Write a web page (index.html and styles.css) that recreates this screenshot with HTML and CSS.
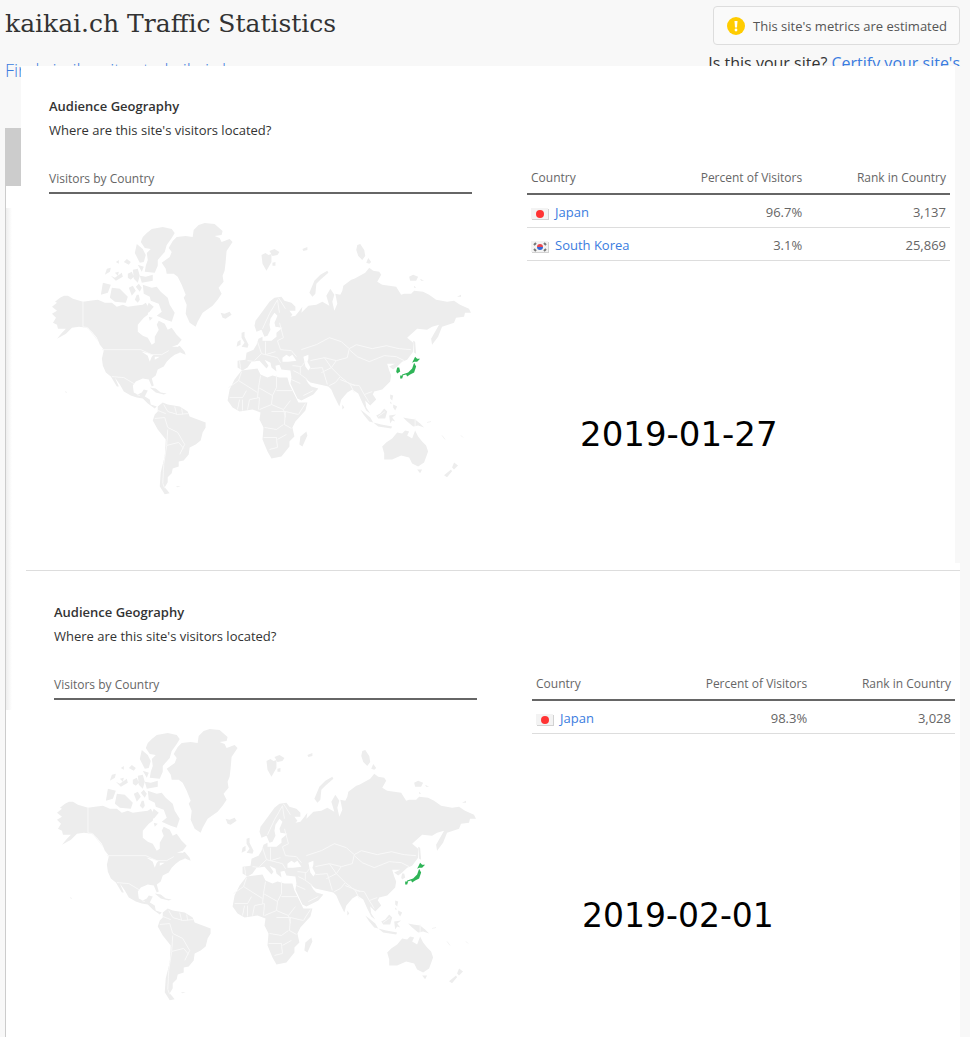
FILE: index.html
```html
<!DOCTYPE html>
<html lang="en">
<head>
<meta charset="utf-8">
<title>kaikai.ch Traffic Statistics</title>
<link rel="stylesheet" href="styles.css">
</head>
<body>
<svg class="defs" aria-hidden="true">
  <symbol id="world" viewBox="49 210 424 300">
    <g class="land">
      <!-- North America -->
      <path d="M64 296L68 296L73 299L83 302L90 301L98 300L105 303L112 303L117 307L123 305L128 307L135 306L143 305L146 303L149 308L148 315L144 318L138 325L138 332L143 336L148 338L152 345L155 343L155 337L159 330L157 325L159 321L165 324L168 330L172 328L177 335L182 340L178 345L172 347L177 347L181 349L180 353L175 355L171 358L167 362L164 367L158 370L156 376L152 379L154 386L152 387L149 380L143 379L136 382L133 386L134 393L138 395L142 393L144 390L148 391L145 397L150 400L151 405L157 407L155 409L148 404L143 399L137 398L131 396L124 392L120 385L115 378L119 387L117 387L111 377L106 373L103 366L102 359L104 350L100 345L97 338L92 332L87 328L79 327L72 328L66 334L57 339L62 333L66 329L58 329L57 325L53 323L56 318L52 314L57 311L52 307L57 303L55 302L60 298Z"/>
      <!-- Arctic archipelago -->
      <path d="M143 237L147 233L152 229L163 227L172 229L175 233L172 238L167 245L165 252L158 260L158 266L155 273L145 272L146 266L148 260L147 253L151 249L145 248L141 242Z"/>
      <path d="M137 244L143 249L146 255L144 262L140 263L135 253Z"/>
      <path d="M103 283L111 285L108 293L101 295Z"/>
      <path d="M112 288L120 289L125 294L128 297L126 303L115 302L110 298Z"/>
      <path d="M143 285L152 288L157 287L161 292L168 298L170 305L175 313L172 322L166 320L157 316L162 312L159 304L151 301L150 297L144 294Z"/>
      <path d="M105 275L107 269L111 268L110 272ZM111 276L115 278L122 273L123 277L116 281ZM124 262L127 259L131 262L129 265ZM128 274L132 272L134 277L131 280L128 278ZM133 270L138 269L140 276L138 283L134 279ZM138 265L144 267L142 272ZM140 276L146 277L153 275L153 281L142 283ZM129 288L133 286L136 291L132 296ZM136 287L139 284L142 288L140 292ZM137 295L139 295L140 300L138 303L135 300ZM149 303L154 307L149 313L146 310ZM149 317L153 318L150 321ZM116 262L119 260L119 264ZM115 273L119 272L118 276Z"/>
      <!-- Greenland, Iceland -->
      <path d="M177 237L186 236L193 237L194 230L199 225L205 223L215 224L223 231L222 235L215 236L220 238L222 242L230 239L233 242L227 251L226 263L225 271L223 276L224 282L219 288L222 294L218 300L213 306L203 313L198 322L196 327L190 323L186 314L187 305L184 298L186 295L182 285L178 277L174 274L167 274L166 269L162 263L170 257L172 252L169 248L173 241Z"/>
      <path d="M221 313L225 314L230 312L232 315L226 319L223 318Z"/>
      <path d="M150 388L156 389L161 393L167 394L164 395L156 393ZM104 345L108 350L105 350ZM176 348L180 346L185 352L186 355L181 353Z"/>
      <!-- South America -->
      <path d="M158 407L163 403L168 405L180 407L188 412L190 417L198 420L206 423L206 428L203 433L201 441L196 445L190 448L189 455L184 461L179 462L179 467L173 469L172 474L168 478L168 483L165 488L170 494L165 495L160 487L161 473L165 457L166 440L158 430L153 421L155 415L158 412Z"/>
      <path d="M176 487L181 487L178 488Z"/>
      <!-- Africa -->
      <path d="M242 371L250 370L258 369L261 375L268 378L273 376L280 378L288 378L290 385L296 397L299 403L308 403L306 411L296 422L293 428L295 437L290 442L290 447L282 457L272 459L268 452L263 440L264 428L260 420L261 413L253 410L240 412L233 408L228 401L230 390L235 380Z"/>
      <path d="M307 432L308 436L303 447L300 445L301 437Z"/>
      <!-- Europe and Asia -->
      <path d="M255 326L256 321L262 313L270 302L275 298L282 297L285 301L292 303L296 307L296 311L290 311L293 315L291 317L296 316L300 311L303 307L302 313L309 306L317 305L323 302L330 306L327 296L331 289L335 295L333 302L335 311L338 304L336 294L341 295L343 291L344 286L352 280L355 279L366 273L370 268L374 271L380 272L382 275L378 282L383 285L390 286L397 287L402 295L405 294L412 294L415 291L424 292L430 295L437 300L448 302L455 301L461 305L470 309L472 313L466 313L465 317L457 318L455 323L449 325L443 327L439 337L433 345L432 339L440 325L433 327L428 330L418 329L408 338L414 343L414 352L408 360L403 362L398 367L394 370L390 367L396 364L388 364L390 371L392 376L391 382L383 390L375 392L373 394L377 400L371 406L366 401L367 408L371 414L367 411L363 403L359 394L353 390L348 393L342 400L340 407L335 397L332 390L329 387L320 385L311 383L306 379L309 384L312 387L319 389L314 395L302 401L298 399L291 384L292 378L291 371L282 370L280 365L276 366L277 372L272 368L271 363L265 360L269 366L267 369L260 361L252 362L248 368L243 371L238 368L238 361L246 360L247 353L254 350L257 345L259 339L263 337L263 341L272 341L277 337L277 333L283 328L276 327L275 323L278 316L275 313L271 319L270 325L271 330L268 336L265 337L262 330L257 332Z"/>
      <path d="M262 255L266 253L269 255L272 254L272 262L267 271L263 264ZM270 251L275 249L280 252L278 255L273 256ZM273 263L276 262L276 266L273 266ZM303 249L308 247L308 250L304 251ZM358 245L361 244L365 250L366 256L363 260L359 256L357 250ZM367 263L369 258L372 262L370 264ZM410 277L414 275L419 277L417 281L411 281ZM421 279L425 281L422 281ZM415 286L417 288L415 288ZM458 297L462 295L462 297Z"/>
      <path d="M242 333L245 332L245 337L249 345L248 348L242 347L245 343L242 338ZM238 342L241 340L241 345L237 347ZM414 341L416 342L417 354L415 353Z"/>
      <path d="M328 271L329 273L321 280L317 284L316 294L313 297L310 293L315 281L321 275Z"/>
      <!-- South-east Asia and Oceania -->
      <path d="M361 410L365 413L371 418L374 423L370 422L365 416ZM374 423L382 425L393 427L392 429L379 427ZM377 416L381 414L385 409L388 412L386 419L379 419ZM390 416L397 415L393 418L396 422L393 421L391 424ZM391 395L394 396L393 401L391 399ZM394 405L398 407L396 411L394 408ZM391 402L393 404L391 404ZM404 418L409 419L416 420L421 424L425 428L419 426L414 427L408 422ZM343 405L345 408L343 410ZM372 392L375 393L373 395Z"/>
      <path d="M383 447L387 443L393 439L398 433L403 434L406 431L410 432L408 436L413 439L416 431L419 437L423 442L427 446L429 452L425 463L419 467L413 464L410 458L402 456L393 460L385 460L385 454Z"/>
      <path d="M418 470L423 470L421 474ZM455 463L459 466L455 470L453 468ZM452 470L453 472L448 478L445 476Z"/>
      <path d="M443 436L446 440M462 436L464 438M65 392L67 393M428 423L432 422" class="isle"/>
    </g>
    <g class="sea">
      <path d="M283 358L287 355L290 357L293 355L297 361L289 362L283 362Z"/>
      <path d="M304 357L309 355L309 359L308 362L311 368L309 371L306 367Z"/>
      <path d="M142 352L147 353L154 355L152 357L150 362L148 356ZM155 357L160 357L155 360Z"/>
    </g>
    <!-- Country borders -->
    <path class="borders" d="M83 302L83 327L88 328L98 341M102 350H141L152 355L162 355L169 351M112 377L124 378L134 384M137 395L140 396M164 405L168 412L178 415L189 414M155 419L165 418L168 428L178 433L185 445L180 455M168 430L167 446L179 443L184 449M167 446L164 465L163 484L165 489M175 407L177 415M182 409L183 415M158 411L166 414
      M261 376L259 388L273 396L277 388V376M277 391H294M242 372L239 381L229 388M239 381L258 393M273 396L272 405L284 410L291 401M260 410L272 405M230 398H243L247 391M248 410L250 400L260 398L259 410M238 410L240 400M272 412H286L285 425L292 429M265 428L277 430L284 425M264 438H277L278 448L270 450M278 440L287 435M286 412L299 415L306 404M259 388L258 398M284 410L286 418M243 400V411
      M263 329L270 314L278 300L280 313M279 298L286 309M280 323L284 338L278 341L281 350L292 351L297 357M258 342L262 354L255 361M266 342V355L276 352M262 354L278 358L281 363M240 361L241 369M248 361L256 362M293 366L302 367L306 362M294 371L300 374L308 380M301 367V374M292 380L301 384M304 396L314 391
      M302 350L317 345L330 338L342 342L350 349L348 358L337 361L325 358L311 361M350 349L357 345L373 349L387 346L400 349L412 350M350 350L358 357L370 362L385 356L397 357L405 361M337 361L332 368L341 377L351 385L360 386M311 369L323 368L328 385M325 358L332 368L322 373M341 377L336 383L330 386M351 385L355 393M360 386L365 395L373 392M365 395L370 403M341 380L356 386
      M379 417L386 412M416 419V427"/>
    <g class="visited">
      <path d="M416 357L418 359L421 359L418 362L415 362L413 363ZM415 363L417 367L415 373L411 375L408 377L407 375L403 376L403 375L409 373L413 369ZM401 376L404 376L403 379L401 379Z"/>
    </g>
  </symbol>
  <symbol id="korea" viewBox="49 210 424 300">
    <path d="M398 368L400 368L401 372L398 374L397 372Z"/>
  </symbol>
  <symbol id="flag-jp" viewBox="0 0 18 12">
    <rect x="1" y="1" width="17" height="11" fill="#d2d2d2"/>
    <rect width="17" height="11" fill="#f3f3f3"/>
    <circle cx="9" cy="6" r="4" fill="#f33"/>
  </symbol>
  <symbol id="flag-kr" viewBox="0 0 18 12">
    <rect x="1" y="1" width="17" height="11" fill="#d2d2d2"/>
    <rect width="17" height="11" fill="#f3f3f3"/>
    <path d="M6 6a3 3 0 0 1 6 0z" fill="#e8474f"/>
    <path d="M6 6a3 3 0 0 0 6 0z" fill="#3468d8"/>
    <path d="M3 4l2-2M13 2l2 2M3 8l2 2M13 10l2-2" stroke="#777" stroke-width="2"/>
  </symbol>
</svg>

<header class="header">
  <div class="heading">
    <h1>kaikai.ch Traffic Statistics</h1>
    <a class="similar" href="#">Find similar sites to kaikai.ch</a>
  </div>
  <div class="notice">
    <div class="badge">
      <svg class="badge-icon" viewBox="0 0 18 18" aria-hidden="true">
        <circle cx="9" cy="9" r="9" fill="#fc0"/>
        <path d="M7.500 4h3l-.5 6.500h-2z" fill="#fff"/>
        <circle cx="9" cy="13" r="1.400" fill="#fff"/>
      </svg>
      <span>This site's metrics are estimated</span>
    </div>
    <p class="certify">Is this your site? <a href="#">Certify your site's</a></p>
  </div>
</header>

<main class="sheet">
  <div class="tab"></div>
  <section class="snapshot snapshot-first">
    <h2>Audience Geography</h2>
    <p class="question">Where are this site's visitors located?</p>
    <div class="columns">
      <div>
        <h3>Visitors by Country</h3>
        <svg class="map" viewBox="0 0 424 300" role="img" aria-label="World map of visitors">
          <use href="#world" width="424" height="300"/>
          <use href="#korea" class="visited" width="424" height="300"/>
        </svg>
      </div>
      <div>
        <table>
          <thead><tr><th>Country</th><th>Percent of Visitors</th><th>Rank in Country</th></tr></thead>
          <tbody>
            <tr><td><svg class="flag" aria-hidden="true"><use href="#flag-jp"/></svg><a href="#">Japan</a></td><td>96.7%</td><td>3,137</td></tr>
            <tr><td><svg class="flag" aria-hidden="true"><use href="#flag-kr"/></svg><a href="#">South Korea</a></td><td>3.1%</td><td>25,869</td></tr>
          </tbody>
        </table>
        <p class="date">2019-01-27</p>
      </div>
    </div>
  </section>

  <section class="snapshot snapshot-second">
    <h2>Audience Geography</h2>
    <p class="question">Where are this site's visitors located?</p>
    <div class="columns">
      <div>
        <h3>Visitors by Country</h3>
        <svg class="map" viewBox="0 0 424 300" role="img" aria-label="World map of visitors">
          <use href="#world" width="424" height="300"/>
          <use href="#korea" class="land" width="424" height="300"/>
        </svg>
      </div>
      <div>
        <table>
          <thead><tr><th>Country</th><th>Percent of Visitors</th><th>Rank in Country</th></tr></thead>
          <tbody>
            <tr><td><svg class="flag" aria-hidden="true"><use href="#flag-jp"/></svg><a href="#">Japan</a></td><td>98.3%</td><td>3,028</td></tr>
          </tbody>
        </table>
        <p class="date">2019-02-01</p>
      </div>
    </div>
  </section>
</main>
</body>
</html>
```
FILE: styles.css
```css
* {
  box-sizing: border-box;
}

body {
  margin: 0;
  min-height: 100vh;
  display: flex;
  flex-direction: column;
  background: #f8f8f8;
  color: #333;
  font: 13px/24px "Open Sans", "Noto Sans", sans-serif;
}

h1, h2, h3, p {
  margin: 0;
}

a {
  color: #3a7ce0;
  text-decoration: none;
}

.defs {
  position: absolute;
  width: 0;
  height: 0;
}

.header {
  display: flex;
  justify-content: space-between;
  min-height: 128px;
  padding: 6px 10px 0 5px;
}

.heading {
  display: flex;
  flex-direction: column;
  gap: 16px;
}

h1 {
  font: 400 25px/36px "Roboto Slab", "DejaVu Serif", serif;
}

.similar {
  font-size: 18px;
  font-weight: 300;
}

.notice {
  display: flex;
  flex-direction: column;
  align-items: flex-end;
}

.badge {
  display: flex;
  align-items: center;
  gap: 8px;
  height: 39px;
  padding: 0 12px 0 13px;
  border: 1px solid #ddd;
  border-radius: 4px;
  background: #fafafa;
  color: #555;
}

.badge-icon {
  width: 18px;
  height: 18px;
}

.certify {
  padding-top: 6px;
  font-size: 16px;
}

.sheet {
  flex: 1;
  margin: 0 10px 0 5px;
  border-left: 1px solid #ccc;
  background: linear-gradient(to right, #eee, #fff) 0 80px / 6px 502px no-repeat #fff;
}

.tab {
  width: 15px;
  height: 58px;
  background: #ccc;
}

.snapshot-first {
  position: relative;
  margin: -120px 0 0 15px;
  padding: 28px 5px 54px 28px;
  border-right: 5px solid #f8f8f8;
  background: #fff;
}

.snapshot-second {
  margin: 7px 0 0 20px;
  padding: 29px 5px 20px 28px;
  border-top: 1px solid #ddd;
}

h2 {
  font-size: 13px;
  font-weight: 600;
  line-height: 24px;
}

.columns {
  display: grid;
  grid-template-columns: 1fr 1fr;
  gap: 55px;
  padding-top: 25px;
}

h3 {
  padding-bottom: 1px;
  border-bottom: 2px solid #666;
  color: #666;
  font-size: 12px;
  font-weight: 400;
  line-height: 24px;
}

.map {
  display: block;
  width: 100%;
  margin-top: 16px;
}

.land {
  fill: #ededed;
}

.isle {
  fill: none;
  stroke: #f3f3f3;
}

.sea {
  fill: #fff;
}

.borders {
  fill: none;
  stroke: #f8f8f8;
}

.visited {
  fill: #2fb457;
}

table {
  width: 100%;
  border-collapse: separate;
  border-spacing: 0;
  color: #666;
  table-layout: fixed;
}

th {
  padding: 0 4px 4px;
  border-bottom: 2px solid #666;
  font-size: 12px;
  font-weight: 400;
  line-height: 22px;
  text-align: right;
}

th:last-child {
  width: 34%;
}

td {
  padding: 5px 4px 3px;
  border-bottom: 1px solid #ddd;
  text-align: right;
}

th:first-child,
td:first-child {
  text-align: left;
}

.flag {
  width: 18px;
  height: 12px;
  margin-right: 6px;
  vertical-align: -3px;
}

.date {
  padding: 153px 0 0 53px;
  color: #000;
  font: 34px/40px "DejaVu Sans", sans-serif;
}

.snapshot-second .date {
  padding-top: 162px;
  padding-left: 50px;
  font-size: 33px;
}
```
